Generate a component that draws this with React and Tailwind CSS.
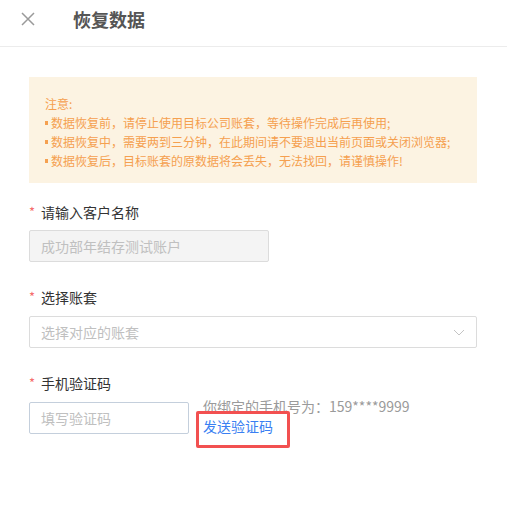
import React from "react";

const font = { fontFamily: '"Noto Sans CJK SC", "Noto Sans", sans-serif' };

function Label({ children }) {
  return (
    <div className="flex items-center text-[14px] text-[#333] leading-[20px]">
      <span className="text-[#f56c6c] w-[12px] text-[13px]">*</span>
      {children}
    </div>
  );
}

function Bullet({ children }) {
  return (
    <p className="flex items-center">
      <span className="inline-block w-[3px] h-[4px] bg-current mr-[3px] mt-[1px]" />
      {children}
    </p>
  );
}

export default function App() {
  return (
    <div className="w-[507px] h-[528px] bg-white" style={font}>
      {/* header */}
      <div className="h-[47px] flex items-center border-b border-[#ececec] pl-[21px]">
        <svg width="14" height="14" viewBox="0 0 14 14" className="mb-[8px]">
          <path d="M1 1L13 13M13 1L1 13" stroke="#9a9a9a" strokeWidth="1.5" />
        </svg>
        <h1 className="ml-[38px] mb-[8px] text-[18px] font-bold text-[#555] leading-[24px]">
          恢复数据
        </h1>
      </div>

      <div className="px-[29px] pt-[30px] w-[506px]">
        {/* notice */}
        <div className="bg-[#fcf3e2] h-[106px] pl-[16px] pt-[17px] text-[12px] leading-[19px] text-[#f5a04f]">
          <p>注意:</p>
          <Bullet>数据恢复前，请停止使用目标公司账套，等待操作完成后再使用;</Bullet>
          <Bullet>数据恢复中，需要两到三分钟，在此期间请不要退出当前页面或关闭浏览器;</Bullet>
          <Bullet>数据恢复后，目标账套的原数据将会丢失，无法找回，请谨慎操作!</Bullet>
        </div>

        <div className="mt-[19px]">
          <Label>请输入客户名称</Label>
          <div className="mt-[8px] w-[240px] h-[32px] border border-[#dcdcdc] bg-[#f4f4f4] rounded-[2px] flex items-center pl-[11px] text-[14px] text-[#c0c0c0]">
            成功部年结存测试账户
          </div>
        </div>

        <div className="mt-[25px]">
          <Label>选择账套</Label>
          <div className="mt-[9px] h-[32px] border border-[#dcdcdc] rounded-[2px] flex items-center justify-between pl-[11px] pr-[11px] text-[14px] text-[#c0c0c0]">
            <span>选择对应的账套</span>
            <svg width="12" height="7" viewBox="0 0 12 7">
              <path d="M1 1L6 6L11 1" fill="none" stroke="#c4c4c4" strokeWidth="1" />
            </svg>
          </div>
        </div>

        <div className="mt-[25px]">
          <Label>手机验证码</Label>
          <div className="mt-[9px] flex">
            <div className="w-[160px] h-[32px] border border-[#c4cfdc] rounded-[2px] flex items-center pl-[11px] text-[14px] text-[#c0c0c0]">
              填写验证码
            </div>
            <div className="ml-[14px] -mt-[6px] text-[14px] leading-[20px]">
              <div className="text-[#9a9a9a]">你绑定的手机号为：159****9999</div>
              <div className="relative">
                <span className="text-[#3a7ff2]">发送验证码</span>
                <div className="absolute left-[-7px] top-[-5px] w-[94px] h-[37px] border-[3px] border-[#f25050] rounded-[2px]" />
              </div>
            </div>
          </div>
        </div>
      </div>
    </div>
  );
}
